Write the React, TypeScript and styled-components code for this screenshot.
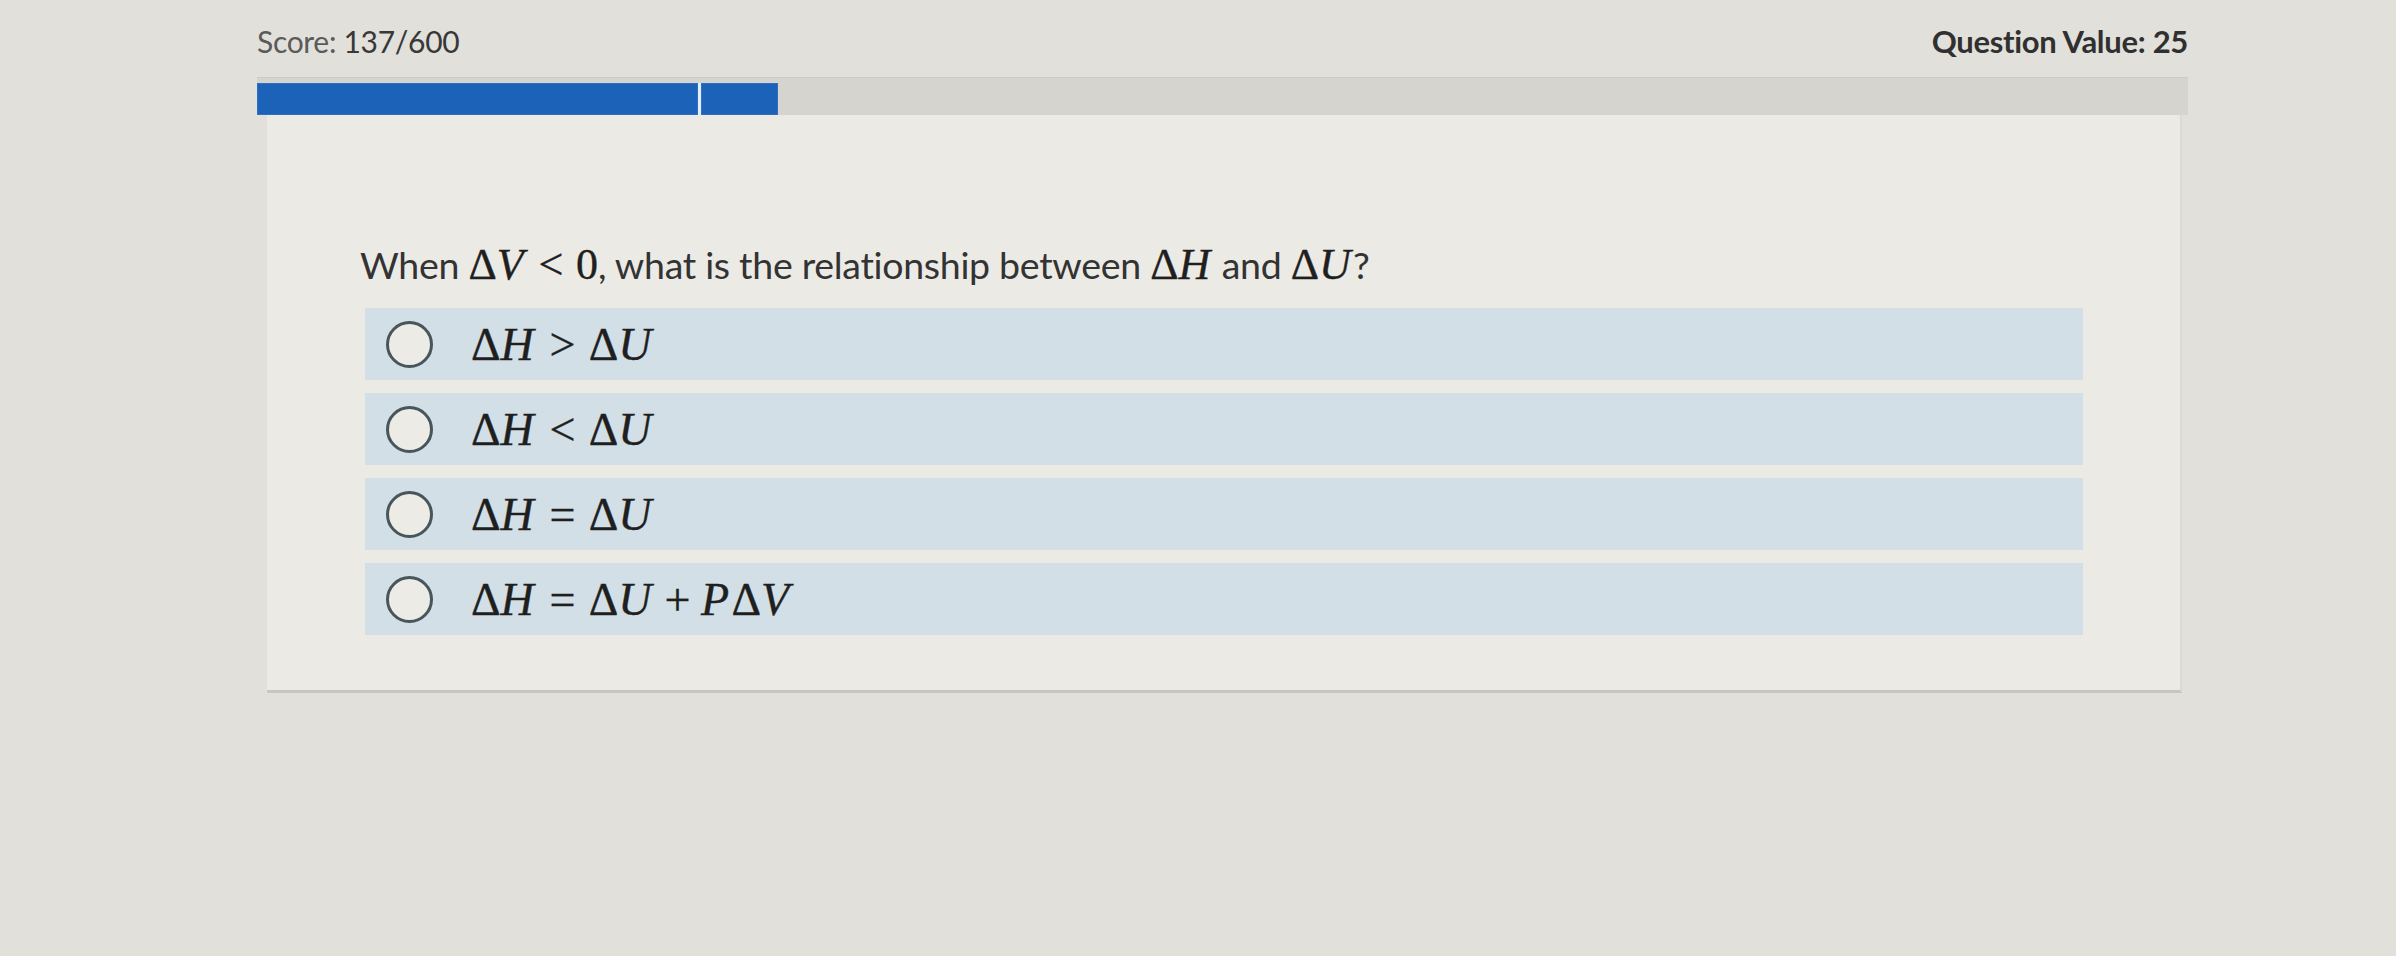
import React from "react";
import styled, { createGlobalStyle } from "styled-components";

const GlobalStyle = createGlobalStyle`
  html, body {
    margin: 0;
    padding: 0;
    background: #e2e0db;
  }
  body {
    font-family: Lato, "Noto Sans", sans-serif;
    color: #333;
  }
  * { box-sizing: border-box; }
`;

const Page = styled.div`
  min-height: 956px;
  padding: 23px 208px 0 257px;
`;

const Header = styled.header`
  display: flex;
  justify-content: space-between;
  align-items: baseline;
  line-height: 36px;
`;

const Score = styled.div`
  font-size: 30px;
  color: #5a5a58;
  letter-spacing: -0.3px;
  b {
    font-weight: 400;
    color: #383838;
  }
`;

const Value = styled.div`
  font-size: 31px;
  font-weight: 700;
  color: #303030;
  letter-spacing: -0.3px;
`;

const Track = styled.div`
  margin-top: 18px;
  height: 38px;
  display: flex;
  align-items: flex-end;
  background: #d6d4cf;
  border-top: 1px solid #cdcbc6;
`;

const Segment = styled.div<{ $first?: boolean }>`
  height: 32px;
  background: #1c62b9;
  box-shadow: inset 0 0 0 1px #2f6fc0;
  ${(p) => (p.$first ? "" : "border-left: 3px solid #e6ecf3;")}
`;

const Card = styled.section`
  margin: 0 6px 0 10px;
  height: 578px;
  padding: 128px 97px 0 93px;
  background: #eceae5;
  border-right: 2px solid #dcdad5;
  border-bottom: 3px solid #c8c6c0;
`;

const Question = styled.p`
  margin: 0;
  font-size: 37.5px;
  line-height: 44px;
  color: #333;
  letter-spacing: -0.3px;
`;

const Options = styled.div`
  margin: 21px 0 0 5px;
  display: flex;
  flex-direction: column;
  gap: 13px;
`;

const Option = styled.label`
  height: 72px;
  display: flex;
  align-items: center;
  padding-left: 21px;
  background: #d2dfe6;
  cursor: pointer;
`;

const Radio = styled.span`
  width: 47px;
  height: 47px;
  flex: none;
  border-radius: 50%;
  border: 3px solid #47565a;
  background: #edebe6;
  margin-right: 38px;
`;

const Math = styled.span<{ $size?: number }>`
  font-family: "Liberation Serif", "DejaVu Serif", serif;
  font-size: ${(p) => p.$size ?? 46}px;
  color: #1f1f1f;
  white-space: nowrap;
  letter-spacing: 0;
  -webkit-text-stroke: 0.4px #1f1f1f;
`;

const V = styled.i`
  font-style: italic;
  padding-right: 0.05em;
`;

const Rel = styled.span`
  margin: 0 0.29em;
`;

const Bin = styled.span`
  margin: 0 0.23em;
`;

type Tok = string;

// Renders a small expression: "D" = Δ, capital letters italic, ops spaced.
const Expr: React.FC<{ src: Tok[]; size?: number }> = ({ src, size }) => (
  <Math $size={size}>
    {src.map((t, i) => {
      if (t === "D") return <span key={i}>Δ</span>;
      if (t === "<" || t === ">" || t === "=") return <Rel key={i}>{t}</Rel>;
      if (t === "+") return <Bin key={i}>+</Bin>;
      if (/^[A-Z]$/.test(t)) return <V key={i}>{t}</V>;
      return <span key={i}>{t}</span>;
    })}
  </Math>
);

const answers: Tok[][] = [
  ["D", "H", ">", "D", "U"],
  ["D", "H", "<", "D", "U"],
  ["D", "H", "=", "D", "U"],
  ["D", "H", "=", "D", "U", "+", "P", "D", "V"],
];

const TOTAL = 600;
const score = 137;
const questionValue = 25;

export default function App() {
  return (
    <>
      <GlobalStyle />
      <Page>
        <Header>
          <Score>
            Score: <b>{score}/{TOTAL}</b>
          </Score>
          <Value>Question Value: {questionValue}</Value>
        </Header>
        <Track>
          <Segment $first style={{ width: `${(score / TOTAL) * 100}%` }} />
          <Segment style={{ width: `${(questionValue / TOTAL) * 100}%` }} />
        </Track>
        <Card>
          <Question>
            When <Expr size={44} src={["D", "V", "<", "0"]} />, what is the
            relationship between <Expr size={44} src={["D", "H"]} /> and{" "}
            <Expr size={44} src={["D", "U"]} />?
          </Question>
          <Options>
            {answers.map((a, i) => (
              <Option key={i}>
                <Radio />
                <Expr src={a} />
              </Option>
            ))}
          </Options>
        </Card>
      </Page>
    </>
  );
}
